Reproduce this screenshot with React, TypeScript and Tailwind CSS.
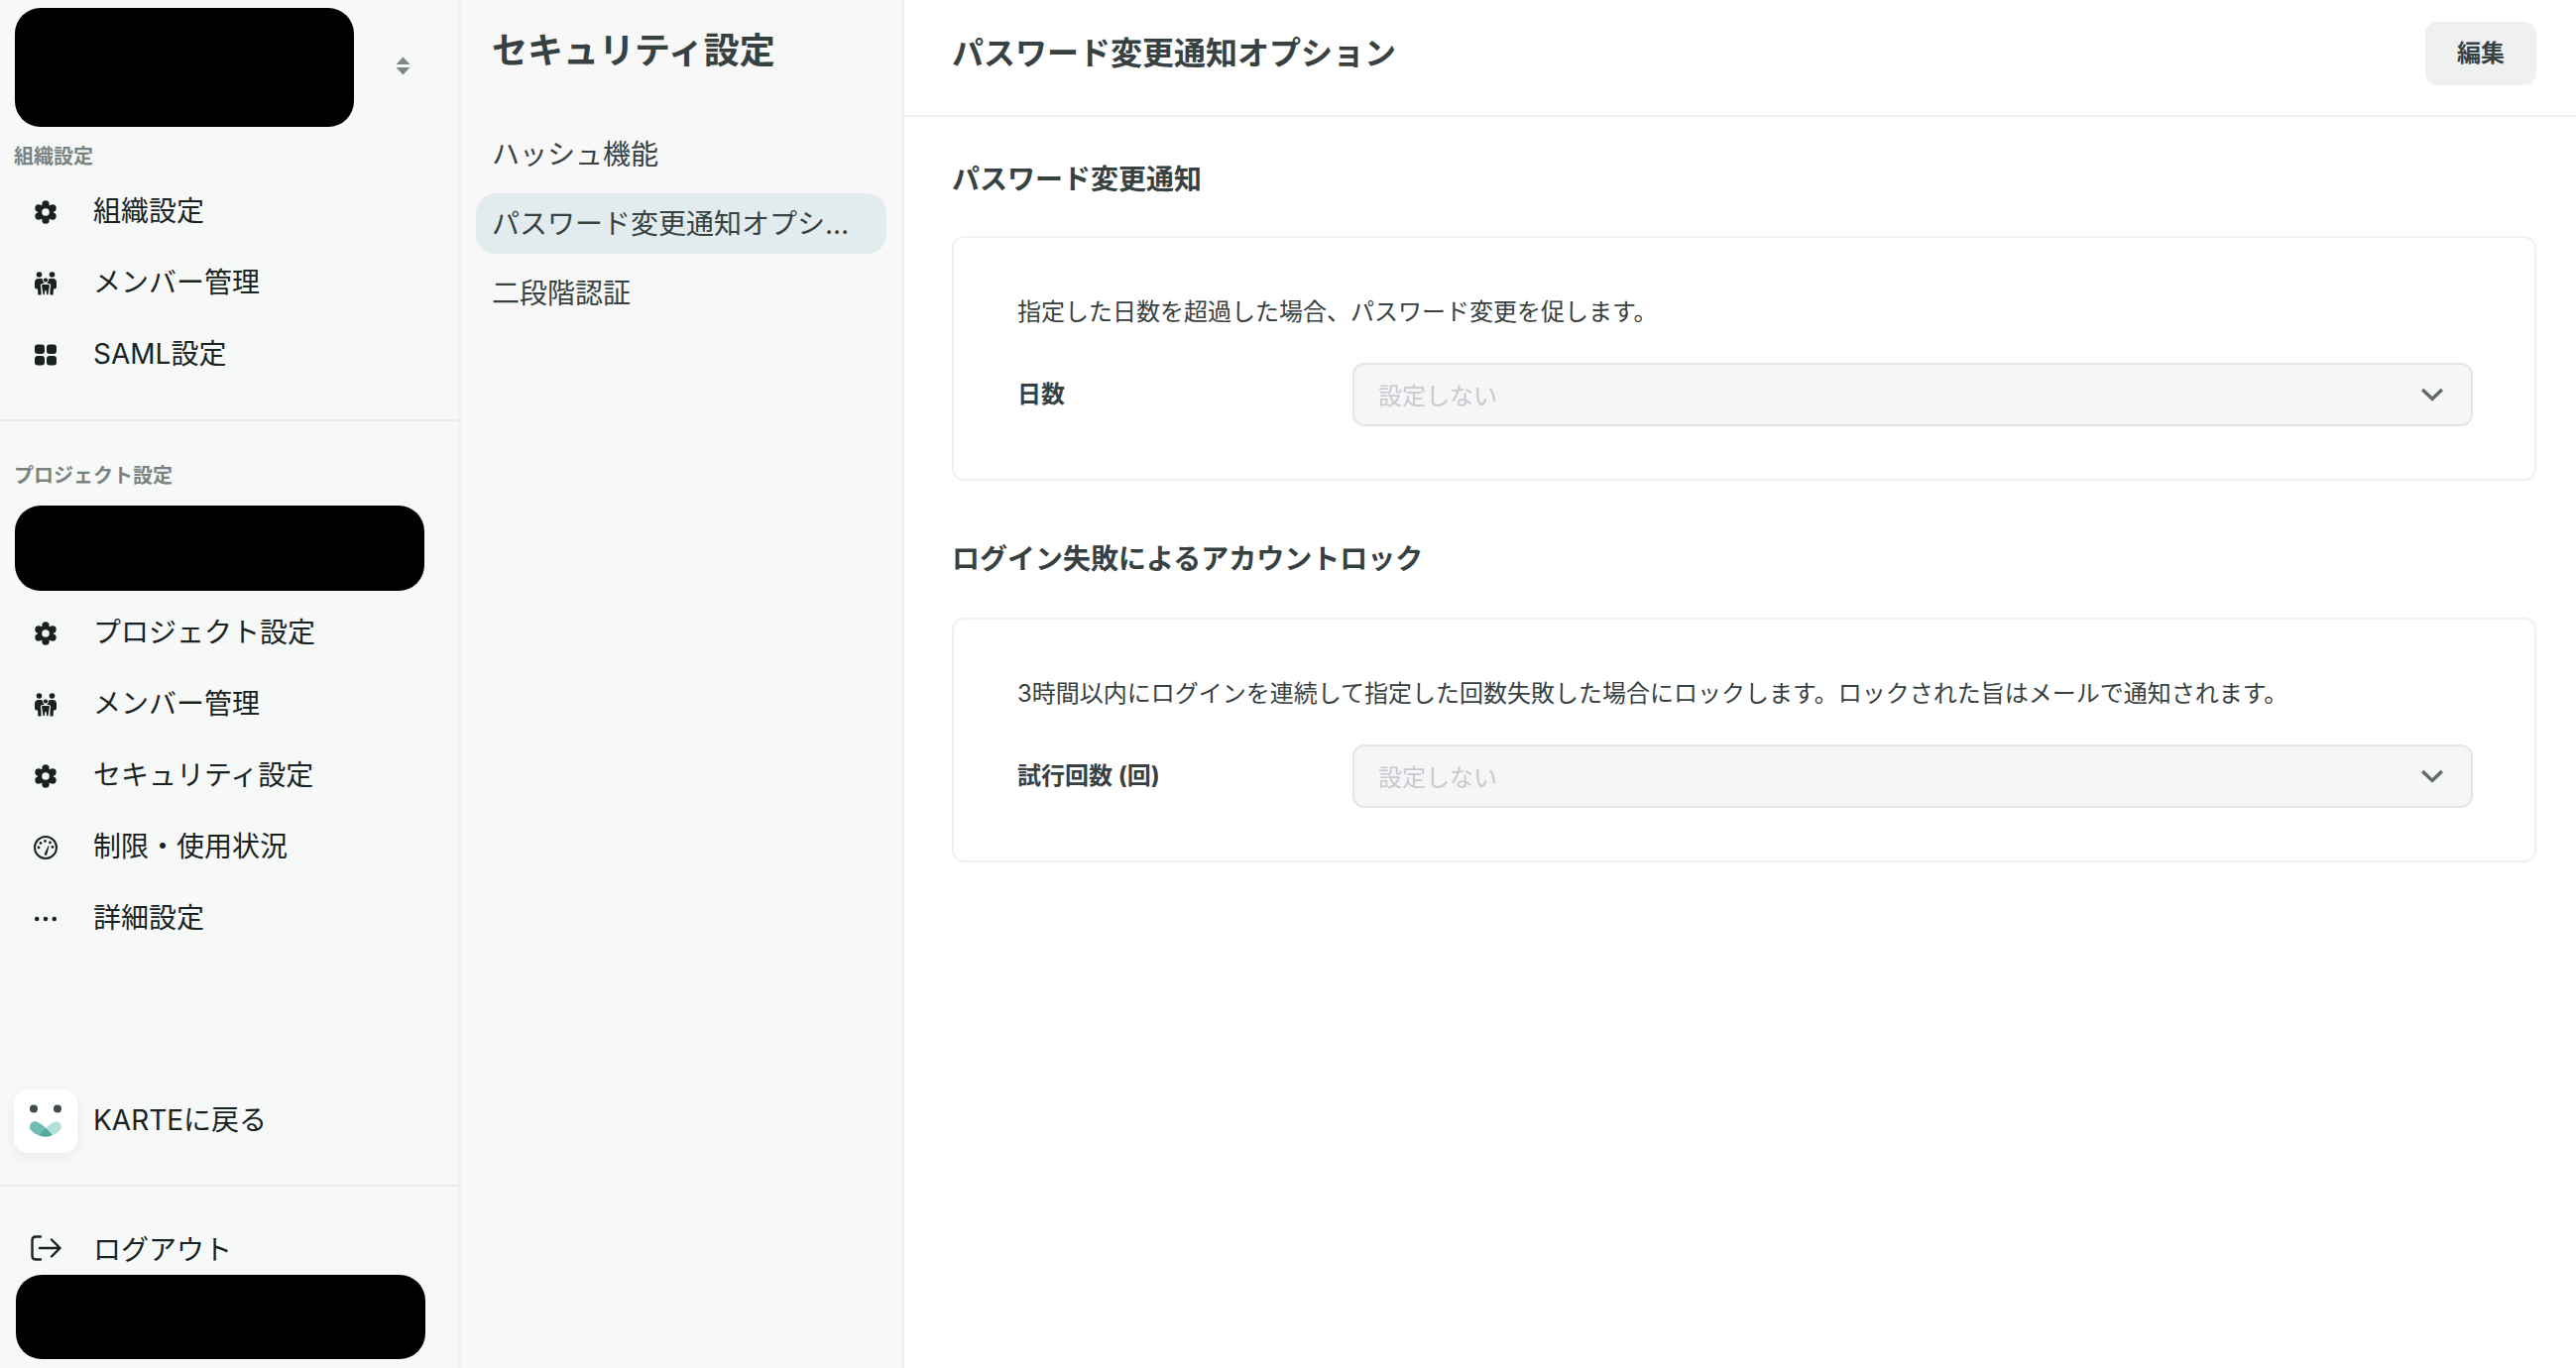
const jp = "font-['Inter','Noto_Sans_CJK_JP','Noto_Sans',sans-serif]";
const bg = "#f7f9f9";

function Gear() {
  return (
    <svg width="24" height="24" viewBox="0 0 24 24" fill="#182221">
      <circle cx="12" cy="12" r="8" />
      <circle cx="12" cy="3.800" r="3.600" />
      <circle cx="12" cy="20.200" r="3.600" />
      <circle cx="4.900" cy="7.900" r="3.600" />
      <circle cx="19.100" cy="7.900" r="3.600" />
      <circle cx="4.900" cy="16.100" r="3.600" />
      <circle cx="19.100" cy="16.100" r="3.600" />
      <circle cx="12" cy="12" r="3.800" fill={bg} />
    </svg>
  );
}

function People() {
  return (
    <svg width="24" height="24" viewBox="0 0 24 24" fill="#182221">
      <circle cx="5.500" cy="3" r="2.800" />
      <circle cx="18.500" cy="3" r="2.800" />
      <path d="M1 11a4 4 0 0 1 4-4h1.500a4 4 0 0 1 4 4v3H8l-.6 9.500H4.400L4 17.500H3a2 2 0 0 1-2-2z" />
      <path d="M23 11a4 4 0 0 0-4-4h-1.500a4 4 0 0 0-4 4v3H16l.6 9.500h3l.4-6H21a2 2 0 0 0 2-2z" />
      <circle cx="12" cy="8.500" r="2.600" stroke={bg} strokeWidth="1" />
      <path d="M9 12.500h6c1 0 1.700.8 1.500 1.800l-1.600 9.500h-2.300L12 19l-.6 4.800H9.100L7.500 14.300c-.2-1 .5-1.800 1.500-1.800z" stroke={bg} strokeWidth="1.200" />
    </svg>
  );
}

function Grid() {
  return (
    <svg width="24" height="24" viewBox="0 0 24 24" fill="#182221">
      <rect x="1" y="1.500" width="10" height="9.500" rx="3" />
      <rect x="13" y="1.500" width="10" height="9.500" rx="3" />
      <rect x="1" y="13" width="10" height="9.500" rx="3" />
      <rect x="13" y="13" width="10" height="9.500" rx="3" />
    </svg>
  );
}

function Gauge() {
  return (
    <svg width="24" height="24" viewBox="0 0 24 24" fill="none">
      <circle cx="12" cy="12" r="11" stroke="#182221" strokeWidth="2" />
      <path d="M10.800 18.200l3.800-8 1 .4-2.300 8.400a1.300 1.300 0 0 1-2.500-.8z" fill="#182221" />
      <circle cx="11.500" cy="5.500" r="1.400" fill="#182221" />
      <circle cx="7" cy="7.500" r="1.400" fill="#182221" />
      <circle cx="16.500" cy="7" r="1.400" fill="#182221" />
      <circle cx="5" cy="12" r="1.400" fill="#182221" />
      <circle cx="19" cy="11.500" r="1.400" fill="#182221" />
    </svg>
  );
}

function Dots() {
  return (
    <svg width="24" height="24" viewBox="0 0 24 24" fill="#182221">
      <circle cx="3.200" cy="12" r="2.300" />
      <circle cx="12" cy="12" r="2.300" />
      <circle cx="20.800" cy="12" r="2.300" />
    </svg>
  );
}

function Logout() {
  return (
    <svg width="31" height="26" viewBox="0 0 31 26" fill="none" stroke="#182221" strokeWidth="2.400" strokeLinecap="round" strokeLinejoin="round">
      <path d="M10 1.500H5C3 1.500 1.500 3 1.500 5v16c0 2 1.500 3.500 3.500 3.500h5" />
      <path d="M9 13h20.500M21 4.500l8.500 8.500-8.500 8.500" />
    </svg>
  );
}

function Logo() {
  return (
    <svg width="34" height="34" viewBox="0 0 34 34">
      <circle cx="5" cy="4.500" r="4" fill="#3f4b49" />
      <circle cx="29" cy="4.500" r="4" fill="#3f4b49" />
      <path d="M17 32.500C11 32.500 4 29 1.500 25c-2-3.500 1.500-8.500 6-7.500 2.500.5 6 3 9.500 7 3.500-4 7-6.500 9.500-7 4.500-1 8 4 6 7.500C30 29 23 32.500 17 32.500z" fill="#b5dfd9" />
      <path d="M17 32.500C11 32.500 4 29 1.500 25c-2-3.500 1.500-8.500 6-7.500 4 1 12.500 8 16 13.500-2 1-4.500 1.500-6.500 1.500z" fill="#72bdb3" />
      <path d="M17 24.600c2.500 2 4.800 4.300 6.500 6.400-2 1-4.500 1.500-6.500 1.500s-4.500-.5-6.500-1.500c1.700-2.100 4-4.400 6.500-6.400z" fill="#58a89e" />
    </svg>
  );
}

function NavItem({ icon, label }: { icon: React.ReactNode; label: string }) {
  return (
    <div className="flex h-[72px] items-center">
      <div className="flex w-[92px] shrink-0 justify-center pt-[6px]">{icon}</div>
      <span className="ml-[2px] pt-[4px] text-[28px] leading-none text-[#182221]">{label}</span>
    </div>
  );
}

function GroupLabel({ children }: { children: string }) {
  return <div className="pl-[14px] text-[20px] leading-[28px] font-bold text-[#7a8382]">{children}</div>;
}

function SettingCard({ text, label }: { text: string; label: string }) {
  return (
    <div className="rounded-[12px] border-2 border-[#f0f1f1] pt-[59px] pr-[62px] pb-[53px] pl-[64px]">
      <p className="text-[24px] leading-[32px] text-[#374141]">{text}</p>
      <div className="mt-[35px] flex items-center">
        <div className="w-[338px] shrink-0 text-[24px] leading-[32px] font-bold text-[#374141]">{label}</div>
        <div className="flex h-[64px] flex-1 items-center justify-between rounded-[12px] border-2 border-[#e4e6e6] bg-[#f6f6f7] pr-[28px] pl-[24px]">
          <span className="pt-[3px] text-[24px] leading-none text-[#c6c9cf]">設定しない</span>
          <svg width="22" height="14" viewBox="0 0 22 14" fill="none" stroke="#5f6a69" strokeWidth="3.400" strokeLinejoin="miter">
            <path d="M1.200 2L11 11.500 20.800 2" />
          </svg>
        </div>
      </div>
    </div>
  );
}

export default function App() {
  return (
    <div className={`flex h-[1380px] w-[2598px] overflow-hidden bg-white ${jp}`}>
      <aside className="flex h-full w-[465px] shrink-0 flex-col border-r-[3px] border-[#eff0f0] bg-[#f7f9f9]">
        <div className="flex items-start pt-[8px] pl-[15px]">
          <div className="h-[120px] w-[342px] rounded-[26px] bg-black" />
          <svg className="mt-[49px] ml-[42px]" width="15" height="19" viewBox="0 0 15 19" fill="#7d8887">
            <path d="M7.500 .5l7 7.500H.5zM7.500 18.500l7-7.500H.5z" />
          </svg>
        </div>
        <div className="mt-[16px]">
          <GroupLabel>組織設定</GroupLabel>
        </div>
        <div className="mt-[3px]">
          <NavItem icon={<Gear />} label="組織設定" />
          <NavItem icon={<People />} label="メンバー管理" />
          <NavItem icon={<Grid />} label="SAML設定" />
        </div>
        <div className="mt-[32px] border-t-[2px] border-[#e9ebeb]" />
        <div className="mt-[41px]">
          <GroupLabel>プロジェクト設定</GroupLabel>
        </div>
        <div className="mt-[16px] ml-[15px] h-[86px] w-[413px] rounded-[26px] bg-black" />
        <div className="mt-[4px]">
          <NavItem icon={<Gear />} label="プロジェクト設定" />
          <NavItem icon={<People />} label="メンバー管理" />
          <NavItem icon={<Gear />} label="セキュリティ設定" />
          <NavItem icon={<Gauge />} label="制限・使用状況" />
          <NavItem icon={<Dots />} label="詳細設定" />
        </div>
        <div className="mt-auto">
          <div className="flex items-center pl-[14px]">
            <div className="flex h-[64px] w-[64px] items-center justify-center rounded-[14px] bg-white shadow-[0_4px_14px_rgba(0,0,0,0.06)]">
              <Logo />
            </div>
            <span className="ml-[16px] pb-[3px] text-[28px] leading-none text-[#182221]">KARTEに戻る</span>
          </div>
          <div className="mt-[32px] border-t-[2px] border-[#e9ebeb]" />
          <div className="mt-[44px]">
            <div className="flex h-[36px] items-center">
              <div className="flex w-[92px] shrink-0 justify-center">
                <Logout />
              </div>
              <span className="ml-[2px] pt-[4px] text-[28px] leading-none text-[#182221]">ログアウト</span>
            </div>
          </div>
          <div className="mt-[9px] mb-[9px] ml-[16px] h-[85px] w-[413px] rounded-[26px] bg-black" />
        </div>
      </aside>

      <nav className="h-full w-[447px] shrink-0 border-r-[2px] border-[#eeefef] bg-[#f8f8f8] pr-[16px] pl-[15px]">
        <h1 className="mt-[27px] pl-[16px] text-[36px] leading-[48px] font-bold text-[#374141]">セキュリティ設定</h1>
        <ul className="mt-[50px] flex flex-col gap-[9px] text-[28px] text-[#374141]">
          <li className="flex h-[61px] items-center rounded-[20px] pl-[16px]">ハッシュ機能</li>
          <li className="flex h-[61px] items-center rounded-[20px] bg-[#e2ebed] pr-[17px] pl-[16px]">
            <span className="truncate">パスワード変更通知オプション</span>
          </li>
          <li className="flex h-[61px] items-center rounded-[20px] pl-[16px]">二段階認証</li>
        </ul>
      </nav>

      <main className="min-w-0 flex-1 bg-white">
        <header className="flex h-[118px] items-start justify-between border-b-[2px] border-[#f0f1f1] pt-[22px] pr-[40px] pl-[48px]">
          <h2 className="text-[32px] leading-[64px] font-bold text-[#374141]">パスワード変更通知オプション</h2>
          <button className="h-[64px] w-[112px] rounded-[12px] bg-[#eff1f1] text-[24px] font-bold text-[#374141]">編集</button>
        </header>
        <div className="pt-[43px] pr-[40px] pl-[48px]">
          <h3 className="text-[28px] leading-[40px] font-bold text-[#374141]">パスワード変更通知</h3>
          <div className="mt-[37px]">
            <SettingCard text="指定した日数を超過した場合、パスワード変更を促します。" label="日数" />
          </div>
          <h3 className="mt-[59px] text-[28px] leading-[40px] font-bold text-[#374141]">ログイン失敗によるアカウントロック</h3>
          <div className="mt-[39px]">
            <SettingCard text="3時間以内にログインを連続して指定した回数失敗した場合にロックします。ロックされた旨はメールで通知されます。" label="試行回数 (回)" />
          </div>
        </div>
      </main>
    </div>
  );
}
